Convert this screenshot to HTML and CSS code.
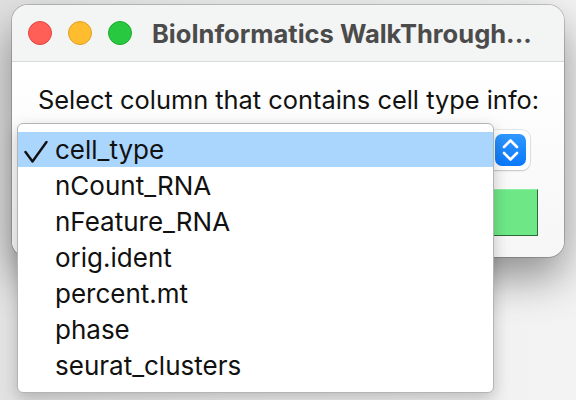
FILE: index.html
```html
<!DOCTYPE html>
<html>
<head>
<meta charset="utf-8">
<link rel="stylesheet" href="styles.css">
</head>
<body>
<div class="window">
  <div class="titlebar">
    <div class="lights">
      <span class="light red"></span>
      <span class="light yellow"></span>
      <span class="light green"></span>
    </div>
    <div class="title">BioInformatics WalkThrough...</div>
  </div>
  <div class="content">
    <div class="label">Select column that contains cell type info:</div>
    <div class="popup">
      <span class="stepper">
        <svg width="31" height="32" viewBox="0 0 31 32">
          <path d="M9 13 L15.5 6.5 L22 13" fill="none" stroke="#fff" stroke-width="2.6" stroke-linecap="round" stroke-linejoin="round"/>
          <path d="M9 19 L15.5 25.5 L22 19" fill="none" stroke="#fff" stroke-width="2.6" stroke-linecap="round" stroke-linejoin="round"/>
        </svg>
      </span>
    </div>
    <div class="gobtn"></div>
  </div>
</div>
<div class="menu">
  <div class="item selected">
    <svg class="check" width="24" height="22" viewBox="0 0 24 22">
      <path d="M1.5 11 L8.5 20.5 L22.5 1" fill="none" stroke="#111" stroke-width="2.4" stroke-linecap="round" stroke-linejoin="round"/>
    </svg>
    cell_type
  </div>
  <div class="item">nCount_RNA</div>
  <div class="item">nFeature_RNA</div>
  <div class="item">orig.ident</div>
  <div class="item">percent.mt</div>
  <div class="item">phase</div>
  <div class="item">seurat_clusters</div>
</div>
</body>
</html>
```
FILE: styles.css
```css
html, body {
  margin: 0;
  padding: 0;
}
body {
  width: 576px;
  height: 400px;
  overflow: hidden;
  background: linear-gradient(90deg, #e2e2e2 0%, #eeeeee 40%, #f3f3f3 100%);
  font-family: Inter, "Noto Sans", sans-serif;
  position: relative;
  padding-top: 5px;
  box-sizing: border-box;
}
.window {
  margin-left: 12px;
  width: 552px;
  height: 252px;
  border-radius: 16px;
  background: #fdfdfd;
  box-shadow: 0 0 0 1px rgba(0,0,0,0.18), 0 20px 44px rgba(0,0,0,0.42);
  overflow: hidden;
  display: flex;
  flex-direction: column;
}
.titlebar {
  height: 56px;
  background: #f3f4f4;
  border-bottom: 1px solid #d9d9d9;
  display: flex;
  align-items: center;
  padding-left: 16px;
  gap: 20px;
  flex: none;
}
.lights {
  display: flex;
  gap: 16px;
}
.light {
  width: 22px;
  height: 22px;
  border-radius: 50%;
  border: 1px solid;
}
.red { background: #ff5f57; border-color: #e0443e; }
.yellow { background: #febc2e; border-color: #dea123; }
.green { background: #28c840; border-color: #1aab29; }
.title {
  font-weight: 700;
  font-size: 25.5px;
  color: #4b4b4b;
  white-space: nowrap;
}
.content {
  flex: 1;
  display: flex;
  flex-direction: column;
  align-items: stretch;
  padding: 0 26px 0 26px;
  background: linear-gradient(#ffffff, #f6f6f6);
}
.label {
  text-align: center;
  font-size: 25.4px;
  color: #111;
  margin-top: 23px;
  height: 29px;
  line-height: 29px;
  white-space: nowrap;
}
.popup {
  margin-top: 16px;
  margin-right: 8px;
  height: 40px;
  border-radius: 8px;
  background: #fff;
  box-shadow: 0 0 0 1px rgba(0,0,0,0.08), 0 1px 2px rgba(0,0,0,0.15);
  display: flex;
  align-items: center;
  justify-content: flex-end;
  padding: 0 4px 0 14px;
}
.stepper {
  width: 31px;
  height: 32px;
  border-radius: 7px;
  background: linear-gradient(#2f98ff, #0a78fb);
  display: block;
}
.stepper svg { display: block; }
.gobtn {
  margin-top: 19px;
  height: 45px;
  background: #6ee887;
  border: 1px solid;
  border-color: #8cf0a2 #2c6a37 #2c6a37 #8cf0a2;
}
.menu {
  position: absolute;
  left: 17px;
  top: 123px;
  width: 475px;
  height: 252px;
  background: #fff;
  border: 1px solid #b4b4b4;
  border-radius: 6px;
  box-shadow: 0 6px 16px rgba(0,0,0,0.22);
  padding: 8px 0;
  box-sizing: content-box;
}
.item {
  height: 36px;
  line-height: 36px;
  font-size: 26px;
  color: #111;
  padding-left: 37px;
  position: relative;
  white-space: nowrap;
}
.item.selected {
  background: #aad6fe;
  height: 35px;
  line-height: 35px;
  margin-bottom: 1px;
}
.check {
  position: absolute;
  left: 6px;
  top: 9px;
}
```
